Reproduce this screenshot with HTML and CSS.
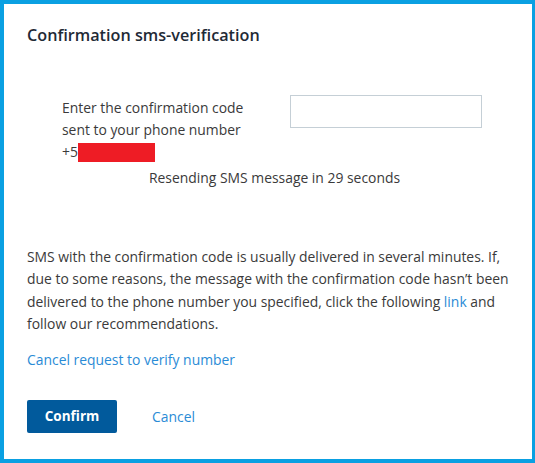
FILE: index.html
```html
<!DOCTYPE html>
<html>
<head>
<meta charset="utf-8">
<link rel="stylesheet" href="styles.css">
</head>
<body>
<div class="dialog">
  <h1 class="title">Confirmation sms-verification</h1>
  <div class="form-row">
    <div class="prompt">
      Enter the confirmation code sent to your phone number<br>
      +5<span class="redact"></span>
    </div>
    <input class="code-input" type="text">
  </div>
  <div class="resend">Resending SMS message in 29 seconds</div>
  <p class="info">SMS with the confirmation code is usually delivered in several minutes. If, due to some reasons, the message with the confirmation code hasn’t been delivered to the phone number you specified, click the following <a class="link" href="#">link</a> and follow our recommendations.</p>
  <a class="link cancel-request" href="#">Cancel request to verify number</a>
  <div class="actions">
    <button class="btn-confirm" type="button">Confirm</button>
    <a class="link cancel" href="#">Cancel</a>
  </div>
</div>
</body>
</html>
```
FILE: styles.css
```css
html, body {
  margin: 0;
  padding: 0;
  background: #ffffff;
}
.dialog {
  box-sizing: border-box;
  width: 535px;
  height: 463px;
  border-style: solid;
  border-color: #0aa0e2;
  border-width: 4px 3px 4px 4px;
  padding: 0 20px 0 23px;
  font-family: "Open Sans", Lato, sans-serif;
  font-size: 13.9px;
  color: #3a3a3a;
}
.title {
  margin: 0;
  padding-top: 19px;
  font-size: 16.2px;
  line-height: 24px;
  font-weight: 600;
  color: #1f2a36;
}
.form-row {
  display: flex;
  align-items: flex-start;
  margin-top: 48px;
  padding-left: 35px;
}
.prompt {
  width: 200px;
  margin-right: 28px;
  line-height: 22px;
  padding-top: 2px;
}
.redact {
  display: inline-block;
  width: 77px;
  height: 19px;
  background: #ee1c25;
  vertical-align: -5px;
}
.code-input {
  box-sizing: border-box;
  width: 192px;
  height: 33px;
  border: 1px solid #c5cfd6;
  margin: 0;
  padding: 0 8px;
  outline: none;
}
.resend {
  text-align: center;
  line-height: 22px;
  margin-top: 4px;
  padding-left: 10px;
}
.info {
  margin: 57px 0 0;
  line-height: 22.4px;
}
.link {
  color: #2a8bd6;
  text-decoration: none;
}
.cancel-request {
  display: block;
  margin-top: 13px;
  line-height: 22px;
}
.actions {
  display: flex;
  align-items: center;
  gap: 35px;
  margin-top: 29px;
}
.btn-confirm {
  width: 90px;
  height: 33px;
  border: none;
  border-radius: 2px;
  background: #015a9c;
  color: #ffffff;
  font-family: "Open Sans", Lato, sans-serif;
  font-size: 13.5px;
  font-weight: 700;
  padding: 0;
}
```
